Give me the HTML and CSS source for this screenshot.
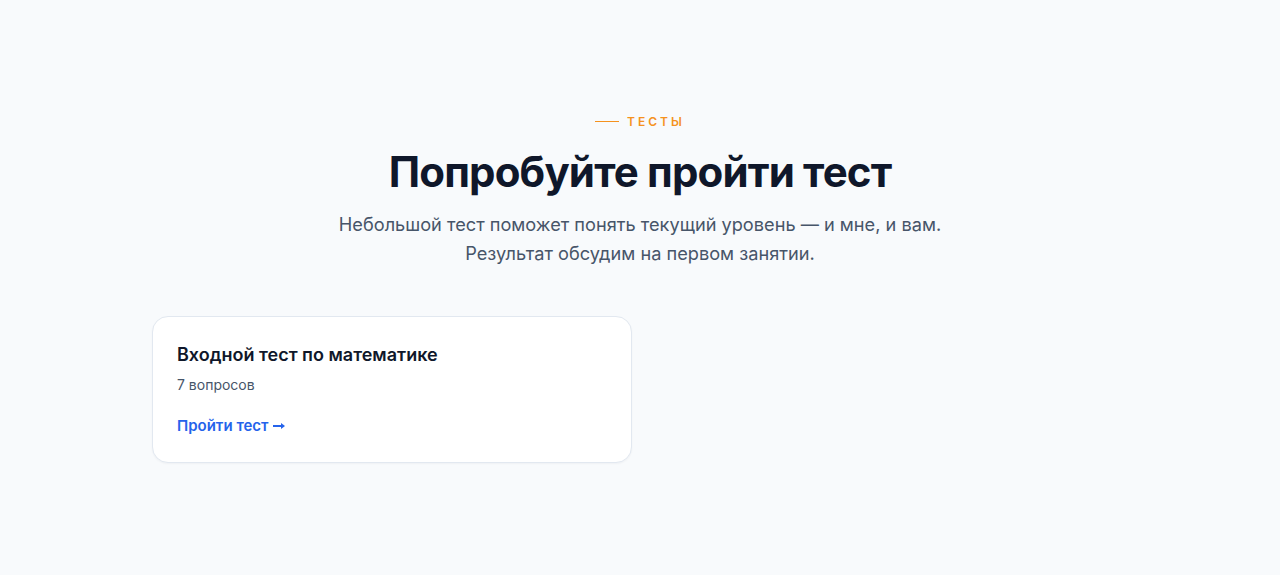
FILE: index.html
```html
<!DOCTYPE html>
<html lang="ru">
<head>
  <meta charset="UTF-8">
  <meta name="viewport" content="width=device-width, initial-scale=1">
  <title>Тесты</title>
  <link rel="stylesheet" href="styles.css">
</head>
<body>
  <section class="tests">
    <div class="container">
      <div class="section-head">
        <div class="eyebrow"><span class="eyebrow-line"></span>Тесты</div>
        <h2 class="title">Попробуйте пройти тест</h2>
        <p class="lead">Небольшой тест поможет понять текущий уровень — и мне, и вам.<br>Результат обсудим на первом занятии.</p>
      </div>

      <div class="test-grid">
        <div class="test-card">
          <h3>Входной тест по математике</h3>
          <div class="meta">7 вопросов</div>
          <a class="start" href="#">Пройти тест
            <svg class="arrow" width="12" height="8" viewBox="0 0 12 8" aria-hidden="true">
              <path d="M0 4h9" stroke="currentColor" stroke-width="2"/>
              <path d="M8 1l4 3-4 3z" fill="currentColor"/>
            </svg>
          </a>
        </div>
      </div>
    </div>
  </section>
</body>
</html>
```

FILE: styles.css
```css
* {
  margin: 0;
  padding: 0;
  box-sizing: border-box;
}
html, body {
  height: 100%;
}
body {
  background: #f8fafc;
  font-family: Inter, "Noto Sans", sans-serif;
  color: #0f172a;
  -webkit-font-smoothing: antialiased;
}

.tests {
  padding: 106px 0 96px;
}

.container {
  max-width: 1024px;
  margin: 0 auto;
  padding: 0 24px;
}

.section-head {
  text-align: center;
  margin-bottom: 48px;
}

.eyebrow {
  display: inline-flex;
  align-items: center;
  gap: 8px;
  font-size: 12px;
  font-weight: 600;
  letter-spacing: 0.25em;
  text-transform: uppercase;
  color: #f5921e;
  line-height: 18px;
}
.eyebrow-line {
  width: 24px;
  height: 1px;
  background: #f5921e;
}

.title {
  margin-top: 16px;
  font-size: 42px;
  font-weight: 700;
  letter-spacing: -0.02em;
  line-height: 1.2;
  color: #0f172a;
}

.lead {
  margin-top: 13px;
  font-size: 18.2px;
  line-height: 29px;
  color: #475569;
}

.test-grid {
  display: grid;
  grid-template-columns: repeat(2, 1fr);
  gap: 16px;
}

.test-card {
  background: #fff;
  border: 1px solid #e2e8f0;
  border-radius: 16px;
  padding: 25px 24px 25px;
  box-shadow: 0 1px 2px rgba(15, 23, 42, 0.04);
}
.test-card h3 {
  font-size: 18px;
  font-weight: 600;
  line-height: 26px;
  color: #0f172a;
}
.meta {
  margin-top: 7px;
  font-size: 14px;
  line-height: 20px;
  color: #475569;
}
.start {
  display: inline-flex;
  align-items: center;
  gap: 4px;
  margin-top: 20px;
  font-size: 15px;
  font-weight: 600;
  line-height: 22px;
  color: #2563eb;
  text-decoration: none;
}
.arrow {
  margin-top: 1px;
}
```
